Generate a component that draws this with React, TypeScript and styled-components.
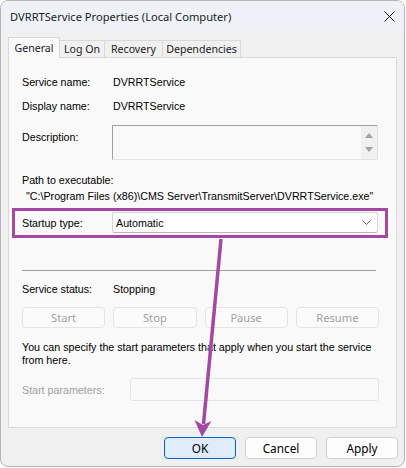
import React from "react";
import styled, { createGlobalStyle } from "styled-components";

const SEGOE = `"Noto Sans", "Open Sans", sans-serif`;
const DLG = `"Liberation Sans", Arial, sans-serif`;
const PURPLE = "#a349a4";

const Global = createGlobalStyle`
  html, body { margin: 0; padding: 0; background: #ffffff; }
  * { box-sizing: border-box; }
`;

const Root = styled.div`
  position: relative;
  width: 406px;
  height: 468px;
  overflow: hidden;
`;

const Window = styled.div`
  width: 405px;
  height: 467px;
  border: 1px solid #b4b4b4;
  border-radius: 8px;
  background: #f0f0f0;
  overflow: hidden;
  display: flex;
  flex-direction: column;
`;

const TitleBar = styled.div`
  height: 30px;
  flex: none;
  display: flex;
  align-items: center;
  justify-content: space-between;
  padding: 0 9px 0 9px;
  background: #eef2f8;
`;

const Title = styled.div`
  font-family: ${SEGOE};
  font-size: 11.15px;
  color: #1a1a1a;
`;

const CloseIcon = styled.svg`
  width: 11px;
  height: 11px;
`;

const Body = styled.div`
  flex: 1;
  display: flex;
  flex-direction: column;
  padding: 7px 7px 0 7px;
`;

const TabRow = styled.div`
  display: flex;
  align-items: flex-end;
  height: 20px;
  position: relative;
  z-index: 1;
  margin-bottom: -1px;
`;

const Tab = styled.div<{ $active?: boolean; $w: number }>`
  width: ${(p) => p.$w}px;
  height: ${(p) => (p.$active ? 21 : 18)}px;
  display: flex;
  align-items: center;
  justify-content: center;
  font-family: ${SEGOE};
  font-size: 10.6px;
  white-space: nowrap;
  color: #1a1a1a;
  background: ${(p) => (p.$active ? "#f9f9f9" : "#f0f0f0")};
  border: 1px solid #d9d9d9;
  border-bottom: ${(p) => (p.$active ? "none" : "1px solid #d9d9d9")};
  margin-right: -1px;
  padding-bottom: ${(p) => (p.$active ? 1 : 0)}px;
`;

const Panel = styled.div`
  height: 371px;
  flex: none;
  background: #f9f9f9;
  border: 1px solid #d9d9d9;
  padding: 16px 17px 0 13px;
  display: flex;
  flex-direction: column;
  font-family: ${DLG};
  font-size: 10.7px;
  color: #000;
`;

const Row = styled.div<{ $h: number; $mt?: number }>`
  display: flex;
  align-items: center;
  height: ${(p) => p.$h}px;
  margin-top: ${(p) => p.$mt ?? 0}px;
  flex: none;
`;

const TopRow = styled(Row)`
  align-items: flex-start;
`;

const Label = styled.div<{ $w?: number; $disabled?: boolean; $mt?: number }>`
  width: ${(p) => p.$w ?? 90}px;
  flex: none;
  margin-top: ${(p) => p.$mt ?? 0}px;
  color: ${(p) => (p.$disabled ? "#a0a0a0" : "#000")};
  white-space: nowrap;
`;

const Value = styled.div`
  padding-left: 1px;
  white-space: nowrap;
`;

const PathValue = styled.div`
  padding-left: 4px;
  white-space: nowrap;
`;

const DescBox = styled.div`
  width: 266px;
  height: 35px;
  display: flex;
  justify-content: flex-end;
  border-top: 1px solid #a0a0a0;
  border-left: 1px solid #a0a0a0;
  border-right: 1px solid #e3e3e3;
  border-bottom: 1px solid #e3e3e3;
  background: #f9f9f9;
`;

const ScrollTrack = styled.div`
  width: 16px;
  height: 100%;
  background: #f0f0f0;
  display: flex;
  flex-direction: column;
  align-items: center;
  justify-content: space-around;
  padding: 3px 0;
`;

const Tri = styled.div<{ $down?: boolean }>`
  width: 0;
  height: 0;
  border-left: 4px solid transparent;
  border-right: 4px solid transparent;
  ${(p) =>
    p.$down
      ? "border-top: 5px solid #a3a3a3;"
      : "border-bottom: 5px solid #a3a3a3;"}
`;

const StartupRow = styled(Row)`
  position: relative;
  &::after {
    content: "";
    position: absolute;
    top: -4px;
    bottom: -5px;
    left: -10px;
    right: -9px;
    border: 3px solid ${PURPLE};
    pointer-events: none;
  }
`;

const Select = styled.div`
  width: 266px;
  height: 21px;
  background: #ffffff;
  border: 1px solid #d5d5d5;
  border-bottom-color: #b8b8b8;
  border-radius: 3px;
  display: flex;
  align-items: center;
  justify-content: space-between;
  padding: 0 6px 0 3px;
`;

const Chevron = styled.svg`
  width: 9px;
  height: 5px;
`;

const Separator = styled.div`
  height: 1px;
  background: #a0a0a0;
  margin: 37px 3px 0 0;
  flex: none;
`;

const ControlGrid = styled.div`
  display: grid;
  grid-template-columns: repeat(4, 1fr);
  column-gap: 8px;
  height: 21px;
  margin-top: 10px;
  flex: none;
`;

const DisabledButton = styled.div`
  border: 1px solid #e5e5e5;
  border-radius: 4px;
  background: #fbfbfb;
  color: #a0a0a0;
  font-family: ${SEGOE};
  font-size: 11.15px;
  display: flex;
  align-items: center;
  justify-content: center;
`;

const Info = styled.div`
  margin-top: 13px;
  line-height: 13px;
  white-space: nowrap;
  flex: none;
`;

const ParamInput = styled.div`
  flex: 1;
  height: 23px;
  border: 1px solid #e5e5e5;
  border-radius: 3px;
  background: #f9f9f9;
`;

const Footer = styled.div`
  display: flex;
  justify-content: flex-end;
  gap: 9px;
  margin-top: 9px;
  margin-right: -1px;
`;

const DialogButton = styled.div<{ $default?: boolean }>`
  width: 72px;
  height: 22px;
  border-radius: 4px;
  border: 1px solid ${(p) => (p.$default ? "#0067c0" : "#d0d0d0")};
  background: ${(p) => (p.$default ? "#e0ecf9" : "#fdfdfd")};
  font-family: ${SEGOE};
  font-size: 11.8px;
  color: #000;
  display: flex;
  align-items: center;
  justify-content: center;
`;

const Overlay = styled.svg`
  position: absolute;
  left: 0;
  top: 0;
  width: 406px;
  height: 468px;
  pointer-events: none;
`;

const tabs: { label: string; w: number }[] = [
  { label: "General", w: 52 },
  { label: "Log On", w: 46 },
  { label: "Recovery", w: 59 },
  { label: "Dependencies", w: 79 },
];

export default function App() {
  return (
    <Root>
      <Global />
      <Window>
        <TitleBar>
          <Title>DVRRTService Properties (Local Computer)</Title>
          <CloseIcon viewBox="0 0 11 11">
            <path d="M0.5 0.5 L10.5 10.5 M10.5 0.5 L0.5 10.5" stroke="#111" strokeWidth="1" fill="none" />
          </CloseIcon>
        </TitleBar>
        <Body>
          <TabRow>
            {tabs.map((t, i) => (
              <Tab key={t.label} $w={t.w} $active={i === 0}>
                {t.label}
              </Tab>
            ))}
          </TabRow>
          <Panel>
            <Row $h={16}>
              <Label>Service name:</Label>
              <Value>DVRRTService</Value>
            </Row>
            <Row $h={16} $mt={8}>
              <Label>Display name:</Label>
              <Value>DVRRTService</Value>
            </Row>
            <TopRow $h={35} $mt={11}>
              <Label $mt={6}>Description:</Label>
              <DescBox>
                <ScrollTrack>
                  <Tri />
                  <Tri $down />
                </ScrollTrack>
              </DescBox>
            </TopRow>
            <Row $h={16} $mt={12}>
              <Label>Path to executable:</Label>
            </Row>
            <Row $h={16}>
              <PathValue>"C:\Program Files (x86)\CMS Server\TransmitServer\DVRRTService.exe"</PathValue>
            </Row>
            <StartupRow $h={21} $mt={8}>
              <Label>Startup type:</Label>
              <Select>
                <span>Automatic</span>
                <Chevron viewBox="0 0 9 5">
                  <path d="M0.5 0.5 L4.5 4.5 L8.5 0.5" stroke="#606060" strokeWidth="1" fill="none" />
                </Chevron>
              </Select>
            </StartupRow>
            <Separator />
            <Row $h={16} $mt={10}>
              <Label>Service status:</Label>
              <Value>Stopping</Value>
            </Row>
            <ControlGrid>
              <DisabledButton>Start</DisabledButton>
              <DisabledButton>Stop</DisabledButton>
              <DisabledButton>Pause</DisabledButton>
              <DisabledButton>Resume</DisabledButton>
            </ControlGrid>
            <Info>
              You can specify the start parameters that apply when you start the service
              <br />
              from here.
            </Info>
            <Row $h={23} $mt={11}>
              <Label $w={108} $disabled>
                Start parameters:
              </Label>
              <ParamInput />
            </Row>
          </Panel>
          <Footer>
            <DialogButton $default>OK</DialogButton>
            <DialogButton>Cancel</DialogButton>
            <DialogButton>Apply</DialogButton>
          </Footer>
        </Body>
      </Window>
      <Overlay viewBox="0 0 406 468">
        <line x1="221" y1="239" x2="203.5" y2="424" stroke={PURPLE} strokeWidth="3.5" />
        <polygon points="194.5,420 203,425 211.5,421 202,437" fill={PURPLE} />
      </Overlay>
    </Root>
  );
}
